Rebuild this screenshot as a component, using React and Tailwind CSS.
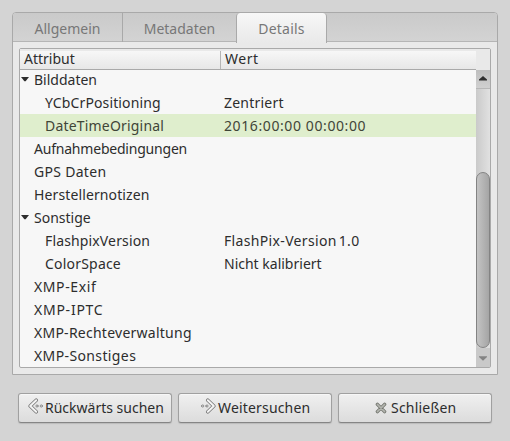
import clsx from "clsx";

const rows = [
  { label: "Bilddaten", level: 0, open: true },
  { label: "YCbCrPositioning", level: 1, tracking: "tracking-[0.13px]", value: "Zentriert", valueTracking: "tracking-[0.22px]" },
  { label: "DateTimeOriginal", level: 1, tracking: "tracking-[0.19px]", value: "2016:00:00 00:00:00", valueTracking: "tracking-[0.6px]", selected: true },
  { label: "Aufnahmebedingungen", level: 0, tracking: "tracking-[-0.21px]" },
  { label: "GPS Daten", level: 0, tracking: "tracking-[0.3px]" },
  { label: "Herstellernotizen", level: 0, tracking: "tracking-[0.12px]" },
  { label: "Sonstige", level: 0, open: true },
  { label: "FlashpixVersion", level: 1, tracking: "tracking-[0.14px]", value: "FlashPix-Version 1.0", valueTracking: "tracking-[0.34px] [word-spacing:-2px]" },
  { label: "ColorSpace", level: 1, tracking: "tracking-[0.2px]", value: "Nicht kalibriert" },
  { label: "XMP-Exif", level: 0, tracking: "tracking-[0.6px]" },
  { label: "XMP-IPTC", level: 0, tracking: "tracking-[0.75px]" },
  { label: "XMP-Rechteverwaltung", level: 0, tracking: "tracking-[0.25px]" },
  { label: "XMP-Sonstiges", level: 0, tracking: "tracking-[0.38px]" },
];

const Tab = ({ label, active, className }) => (
  <div
    className={clsx(
      "flex justify-center pt-[6px] leading-5 text-[#777777]",
      active
        ? "h-[30px] rounded-t-[4px] border-x border-[#a9a9a9] bg-linear-to-b from-[#f7f7f7] to-[#e9e9e9]"
        : "h-[29px]",
      className
    )}
  >
    {label}
  </div>
);

const Row = ({ label, level, open, tracking, value, valueTracking, selected }) => (
  <div className={clsx("flex h-[23px] shrink-0 leading-6", selected && "bg-[#dfeecd] text-[#3f4538]")}>
    <div className={clsx("flex w-[204px] shrink-0", level === 1 ? "pl-[25px]" : open ? "pl-[1px]" : "pl-[14px]", tracking)}>
      {open && (
        <svg className="mt-[9px] mr-[5px] h-[5px] w-[8px]" viewBox="0 0 8 5">
          <path d="M0 0h8L4.6 4.3h-1.2z" fill="#2d2d2d" />
        </svg>
      )}
      {label}
    </div>
    <div className={valueTracking}>{value}</div>
  </div>
);

const Scrollbar = () => (
  <div className="flex w-[14px] shrink-0 flex-col bg-linear-to-r from-[#cacaca] to-[#e1e1e1]">
    <div className="h-[21px] shrink-0 bg-[#e9e9e9]" />
    <div className="flex h-[19px] shrink-0 justify-center border-b border-[#b7b7b7] bg-linear-to-b from-[#bebebe] to-[#d0d0d0] pt-[6px]">
      <svg className="h-[5px] w-[8px]" viewBox="0 0 8 5">
        <path d="M0 4.5V3.6L4 0l4 3.6v.9z" fill="#2d2d2d" />
      </svg>
    </div>
    <div className="h-[83px] shrink-0" />
    <div className="h-[176px] shrink-0 rounded-[7px] border border-[#838383] bg-linear-to-r from-[#c4c4c4] to-[#a5a5a5]" />
    <div className="flex flex-1 justify-center bg-[#c9c9c9] pt-[8px]">
      <svg className="h-[5px] w-[8px]" viewBox="0 0 8 5">
        <path d="M0 .2h8v.9L4 4.7 0 1.1z" fill="#838383" />
      </svg>
    </div>
  </div>
);

const Chevron = ({ className }) => (
  <svg className={className} width="16" height="16" viewBox="0 0 16 16" strokeLinejoin="round" strokeLinecap="round">
    <path d="M8.2 2.2 2.2 8l6 5.8" fill="none" stroke="#777" strokeWidth="3.6" />
    <path d="M8.2 2.2 2.2 8l6 5.8" fill="none" stroke="#f4f4f4" strokeWidth="2" />
    <circle cx="9" cy="8" r="1.1" fill="#eee" stroke="#777" strokeWidth=".8" />
    <circle cx="13.3" cy="8" r="1.1" fill="#eee" stroke="#777" strokeWidth=".8" />
  </svg>
);

const Cross = () => (
  <svg width="12" height="12" viewBox="0 0 12 12" strokeLinecap="round">
    <path d="m2.4 2.4 7.2 7.2m0-7.2L2.4 9.6" stroke="#74766f" strokeWidth="3.4" />
    <path d="m2.4 2.4 7.2 7.2m0-7.2L2.4 9.6" stroke="#b4b6b0" strokeWidth="1.6" />
  </svg>
);

const Button = ({ icon, label, className }) => (
  <button
    className={clsx(
      "flex h-[30px] w-[154px] rounded-[3px] border border-[#a0a0a0] border-b-[#858585] bg-linear-to-b from-[#f0f0f0] to-[#dcdcdc] shadow-[0_1px_1px_#bbbbbb,inset_0_1px_0_#f7f7f7]",
      className
    )}
  >
    {icon}
    <span className="mt-[4px] leading-5">{label}</span>
  </button>
);

const App = () => {
  return (
    <div className="h-[441px] w-[510px] overflow-hidden bg-[#d4d4d4] pt-[12px] font-['Noto_Sans',sans-serif] text-[14px] whitespace-nowrap text-[#2d2d2d]">
      <div className="mx-[12px] flex h-[363px] flex-col rounded-t-[4px] border border-[#a9a9a9] bg-[#e9e9e9]">
        <div className="flex h-[29px] shrink-0 rounded-t-[3px] border-b border-[#b5b5b5] bg-linear-to-b from-[#cacaca] to-[#d3d3d3]">
          <Tab label="Allgemein" className="w-[110px] border-r border-[#a9a9a9]" />
          <Tab label="Metadaten" className="w-[113px]" />
          <Tab label="Details" active className="w-[91px] tracking-[0.2px]" />
        </div>
        <div className="mx-[6px] mt-[6px] flex h-[320px] rounded-[2px] border border-[#a9a9a9] bg-[#f7f7f7]">
          <div className="flex flex-1 flex-col overflow-hidden">
            <div className="flex h-[21px] shrink-0 border-t-2 border-b border-t-[#e9e9e9] border-b-[#a9a9a9] bg-linear-to-b from-[#f7f7f7] to-[#e7e7e7] leading-[15px]">
              <div className="w-[201px] border-r border-[#b5b5b5] pl-[4px]">Attribut</div>
              <div className="pl-[4px] tracking-[0.5px]">Wert</div>
            </div>
            <div className="-mt-[2px]">
              {rows.map((row) => (
                <Row key={row.label} {...row} />
              ))}
            </div>
          </div>
          <Scrollbar />
        </div>
      </div>
      <div className="mt-[18px] ml-[18px] flex gap-[6px]">
        <Button label="Rückwärts suchen" className="pl-[9px]" icon={<Chevron className="mt-[4px] mr-[1px]" />} />
        <Button label="Weitersuchen" className="pl-[21px] tracking-[0.17px]" icon={<Chevron className="mt-[4px] mr-[2px] -scale-x-100" />} />
        <Button label="Schließen" className="pl-[36px] tracking-[0.2px]" icon={<span className="mt-[8px] mr-[4px]"><Cross /></span>} />
      </div>
    </div>
  );
};

export default App;
